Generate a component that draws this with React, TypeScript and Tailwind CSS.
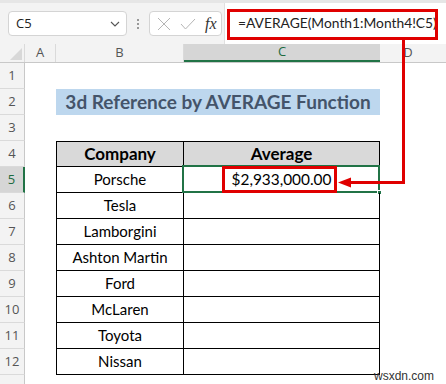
import React from 'react';

const companies = ['Porsche', 'Tesla', 'Lamborgini', 'Ashton Martin', 'Ford', 'McLaren', 'Toyota', 'Nissan'];

const ui = { fontFamily: '"Open Sans", "Noto Sans", sans-serif' };
const cell = { fontFamily: 'Lato, "Open Sans", sans-serif' };

const RowHead: React.FC<{ n: number; active?: boolean; hideLabel?: boolean }> = ({ n, active, hideLabel }) => (
  <div
    className={`w-[25px] shrink-0 h-full flex items-center justify-center text-[13px] border-b border-[#dadada] ${
      active ? 'bg-[#d6d6d6] text-[#1e6b3f] border-r-2 border-r-[#217346]' : 'bg-[#f3f3f3] text-[#555] border-r border-r-[#c8c8c8]'
    }`}
    style={ui}
  >
    {hideLabel ? null : n}
  </div>
);

const App: React.FC = () => {
  const rows = Array.from({ length: 13 }, (_, i) => i + 1);

  return (
    <div className="relative w-[446px] h-[384px] overflow-hidden bg-white">
      {/* Formula bar */}
      <div className="h-[44px] bg-[#f3f3f3] border-t-[3px] border-t-[#e6e6e6] flex items-start">
        <div className="ml-[8px] mt-[8px] w-[119px] h-[25px] bg-white border border-[#d4d4d4] rounded-[4px] flex items-center justify-between pl-[7px] pr-[6px]" style={ui}>
          <span className="text-[13px] text-[#222]">C5</span>
          <svg width="10" height="6" viewBox="0 0 10 6" fill="none" stroke="#555" strokeWidth="1.1">
            <path d="M1 1l4 4 4-4" />
          </svg>
        </div>
        <div className="w-[22px] mt-[8px] h-[25px] flex flex-col items-center justify-center gap-[2px]">
          <span className="w-[2px] h-[2px] bg-[#999]" />
          <span className="w-[2px] h-[2px] bg-[#999]" />
          <span className="w-[2px] h-[2px] bg-[#999]" />
        </div>
        <div className="mt-[8px] w-[73px] h-[25px] bg-white border border-[#d4d4d4] rounded-[4px] flex items-center pl-[7px] gap-[9px]">
          <svg width="14" height="14" viewBox="0 0 14 14" fill="none" stroke="#b5b5b5" strokeWidth="1">
            <path d="M1 1l12 12M13 1L1 13" />
          </svg>
          <svg width="16" height="12" viewBox="0 0 16 12" fill="none" stroke="#b5b5b5" strokeWidth="1">
            <path d="M1 6l4.5 5L15 1" />
          </svg>
          <span className="text-[16px] italic text-[#333]" style={{ fontFamily: '"Liberation Serif", serif' }}>fx</span>
        </div>
        <div className="ml-[2px] flex-1 h-[41px] bg-white border-l border-[#e0e0e0] flex items-center">
          <span className="ml-[13px] text-[13.8px] text-[#222]" style={cell}>=AVERAGE(Month1:Month4!C5)</span>
        </div>
      </div>

      {/* Column headers */}
      <div className="h-[19px] flex bg-[#f3f3f3] border-b border-[#c8c8c8] text-[13px] text-[#555]" style={ui}>
        <div className="w-[25px] border-r border-[#dadada] flex items-end justify-end p-[2px]">
          <svg width="12" height="12" viewBox="0 0 12 12">
            <path d="M12 0v12H0z" fill="#d8d8d8" />
          </svg>
        </div>
        <div className="w-[31px] border-r border-[#dadada] flex items-center justify-center">A</div>
        <div className="w-[128px] border-r border-[#dadada] flex items-center justify-center">B</div>
        <div className="w-[196px] bg-[#d6d6d6] text-[#1e6b3f] border-b-2 border-[#217346] flex items-center justify-center">C</div>
        <div className="flex-1 flex items-center justify-center pr-[10px]">D</div>
      </div>

      {/* Grid rows */}
      {rows.map((r) => {
        const inTable = r >= 4 && r <= 12;
        const isHead = r === 4;
        const name = r >= 5 ? companies[r - 5] : '';
        return (
          <div key={r} className="h-[26px] flex">
            <RowHead n={r} active={r === 5} hideLabel={r === 13} />
            <div className="w-[31px] shrink-0" />
            {r === 2 ? (
              <div className="w-[324px] h-full bg-[#bdd7ee] flex items-center justify-center text-[19px] font-bold text-[#44546a]" style={cell}>
                3d Reference by AVERAGE Function
              </div>
            ) : inTable ? (
              <>
                <div
                  className={`w-[128px] shrink-0 h-full border-l border-r border-b border-black flex items-center justify-center text-black ${
                    isHead ? 'border-t bg-[#d9d9d9] font-bold text-[17px]' : 'text-[15px]'
                  }`}
                  style={cell}
                >
                  {isHead ? 'Company' : name}
                </div>
                <div
                  className={`relative w-[196px] shrink-0 h-full border-r border-b border-black flex items-center justify-center text-black ${
                    isHead ? 'border-t bg-[#d9d9d9] font-bold text-[17px]' : 'text-[15.4px]'
                  }`}
                  style={cell}
                >
                  {isHead ? 'Average' : r === 5 ? (
                    <>
                      <span className="relative z-10">$2,933,000.00</span>
                      <div className="absolute -left-[2px] -top-[2px] -right-[1px] -bottom-[1px] border-2 border-[#217346]" />
                      <div className="absolute -right-[3px] -bottom-[3px] w-[5px] h-[5px] bg-[#217346] border border-white" />
                      <div className="absolute left-[38px] -top-[1px] w-[115px] h-[27px] border-[3px] border-[#e00000]" />
                    </>
                  ) : null}
                </div>
              </>
            ) : null}
          </div>
        );
      })}

      {/* Formula highlight and arrow */}
      <div className="absolute left-[227px] top-[9px] w-[211px] h-[31px] border-[3px] border-[#e00000]" />
      <svg className="absolute left-0 top-0" width="446" height="384" viewBox="0 0 446 384" fill="none">
        <path d="M403.5 40V182.5H350" stroke="#e00000" strokeWidth="3" />
        <path d="M338 182.5l13-5v10z" fill="#e00000" />
      </svg>

      <div className="absolute right-[12px] bottom-[2px] text-[12px] text-[#333] leading-none" style={{ fontFamily: '"Liberation Sans", sans-serif' }}>
        wsxdn.com
      </div>
    </div>
  );
};

export default App;
